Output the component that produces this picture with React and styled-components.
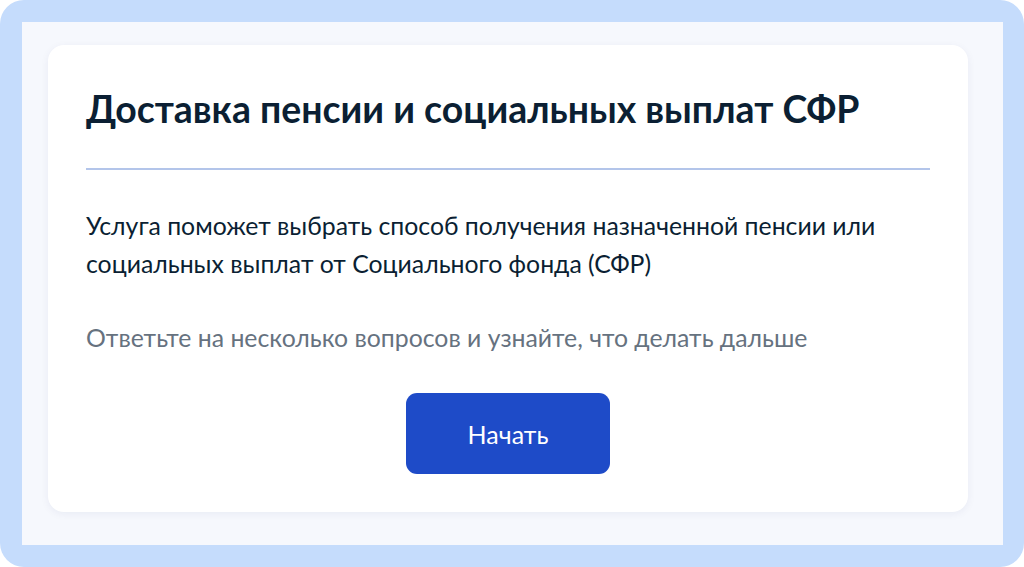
import React from "react";
import styled, { createGlobalStyle } from "styled-components";

const GlobalStyle = createGlobalStyle`
  html, body {
    margin: 0;
    padding: 0;
    background: #ffffff;
  }
  body {
    font-family: Lato, "Noto Sans", sans-serif;
  }
`;

const Frame = styled.div`
  box-sizing: border-box;
  width: 1024px;
  height: 567px;
  padding: 22px 21px 22px 22px;
  background: #c5dcfc;
  border-radius: 24px;
`;

const Backdrop = styled.div`
  box-sizing: border-box;
  height: 100%;
  padding: 23px 35px 33px 26px;
  background: #f6f8fd;
`;

const Card = styled.section`
  box-sizing: border-box;
  height: 100%;
  padding: 42px 38px 0 38px;
  background: #ffffff;
  border-radius: 16px;
  box-shadow: 0 2px 8px rgba(16, 40, 100, 0.06);
  display: flex;
  flex-direction: column;
`;

const Title = styled.h1`
  margin: 0;
  padding-bottom: 37px;
  font-size: 37.4px;
  line-height: 44px;
  font-weight: 700;
  color: #0b1f33;
  border-bottom: 2px solid #b3c5ea;
`;

const Text = styled.p`
  margin: ${(p) => p.$top}px 0 0;
  font-size: 24.8px;
  line-height: 38px;
  color: ${(p) => (p.$muted ? "#66727f" : "#0b1f33")};
`;

const Actions = styled.div`
  display: flex;
  justify-content: center;
  margin-top: 36px;
`;

const Button = styled.button`
  width: 204px;
  height: 81px;
  border: none;
  border-radius: 11px;
  background: #1e4bc8;
  color: #ffffff;
  font-family: inherit;
  font-size: 25px;
  cursor: pointer;
`;

export default function App() {
  return (
    <>
      <GlobalStyle />
      <Frame>
        <Backdrop>
          <Card>
            <Title>Доставка пенсии и социальных выплат СФР</Title>
            <Text $top={37}>
              Услуга поможет выбрать способ получения назначенной пенсии или
              социальных выплат от Социального фонда (СФР)
            </Text>
            <Text $top={36} $muted>
              Ответьте на несколько вопросов и узнайте, что делать дальше
            </Text>
            <Actions>
              <Button>Начать</Button>
            </Actions>
          </Card>
        </Backdrop>
      </Frame>
    </>
  );
}
